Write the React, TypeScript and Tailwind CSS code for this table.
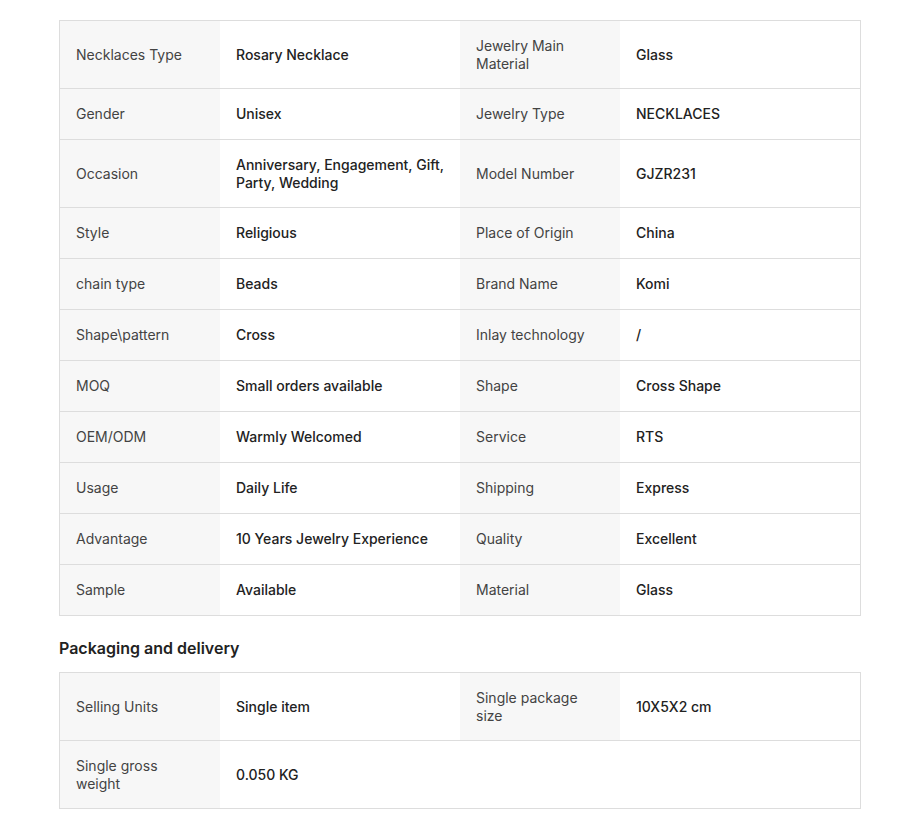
type Row = [string, string, string?, string?];

const specs: Row[] = [
  ["Necklaces Type", "Rosary Necklace", "Jewelry Main Material", "Glass"],
  ["Gender", "Unisex", "Jewelry Type", "NECKLACES"],
  ["Occasion", "Anniversary, Engagement, Gift, Party, Wedding", "Model Number", "GJZR231"],
  ["Style", "Religious", "Place of Origin", "China"],
  ["chain type", "Beads", "Brand Name", "Komi"],
  ["Shape\\pattern", "Cross", "Inlay technology", "/"],
  ["MOQ", "Small orders available", "Shape", "Cross Shape"],
  ["OEM/ODM", "Warmly Welcomed", "Service", "RTS"],
  ["Usage", "Daily Life", "Shipping", "Express"],
  ["Advantage", "10 Years Jewelry Experience", "Quality", "Excellent"],
  ["Sample", "Available", "Material", "Glass"],
];

const packaging: Row[] = [
  ["Selling Units", "Single item", "Single package size", "10X5X2 cm"],
  ["Single gross weight", "0.050 KG"],
];

function Label({ text }: { text?: string }) {
  if (!text) return <div className="bg-white" />;
  return (
    <div className="flex items-center min-h-[50px] px-4 py-4 bg-[#f7f7f7] text-[#434343]">
      {text}
    </div>
  );
}

function Value({ text }: { text?: string }) {
  return (
    <div className="flex items-center min-h-[50px] px-4 py-4 bg-white text-[#222] font-medium">
      {text}
    </div>
  );
}

function SpecTable({ rows }: { rows: Row[] }) {
  return (
    <div className="w-[802px] border border-[#dddddd] text-[14px] leading-[17.5px]">
      {rows.map((r, i) => (
        <div
          key={i}
          className={`grid grid-cols-[160px_240px_160px_240px] ${i > 0 ? "border-t border-[#dddddd]" : ""}`}
        >
          <Label text={r[0]} />
          <Value text={r[1]} />
          <Label text={r[2]} />
          <Value text={r[3]} />
        </div>
      ))}
    </div>
  );
}

export default function App() {
  return (
    <div className="min-h-screen bg-white px-[59px] pt-5 font-['Inter',sans-serif]">
      <SpecTable rows={specs} />
      <h2 className="mt-[22px] mb-[14px] text-[16px] leading-[20px] font-semibold text-[#222]">
        Packaging and delivery
      </h2>
      <SpecTable rows={packaging} />
    </div>
  );
}
